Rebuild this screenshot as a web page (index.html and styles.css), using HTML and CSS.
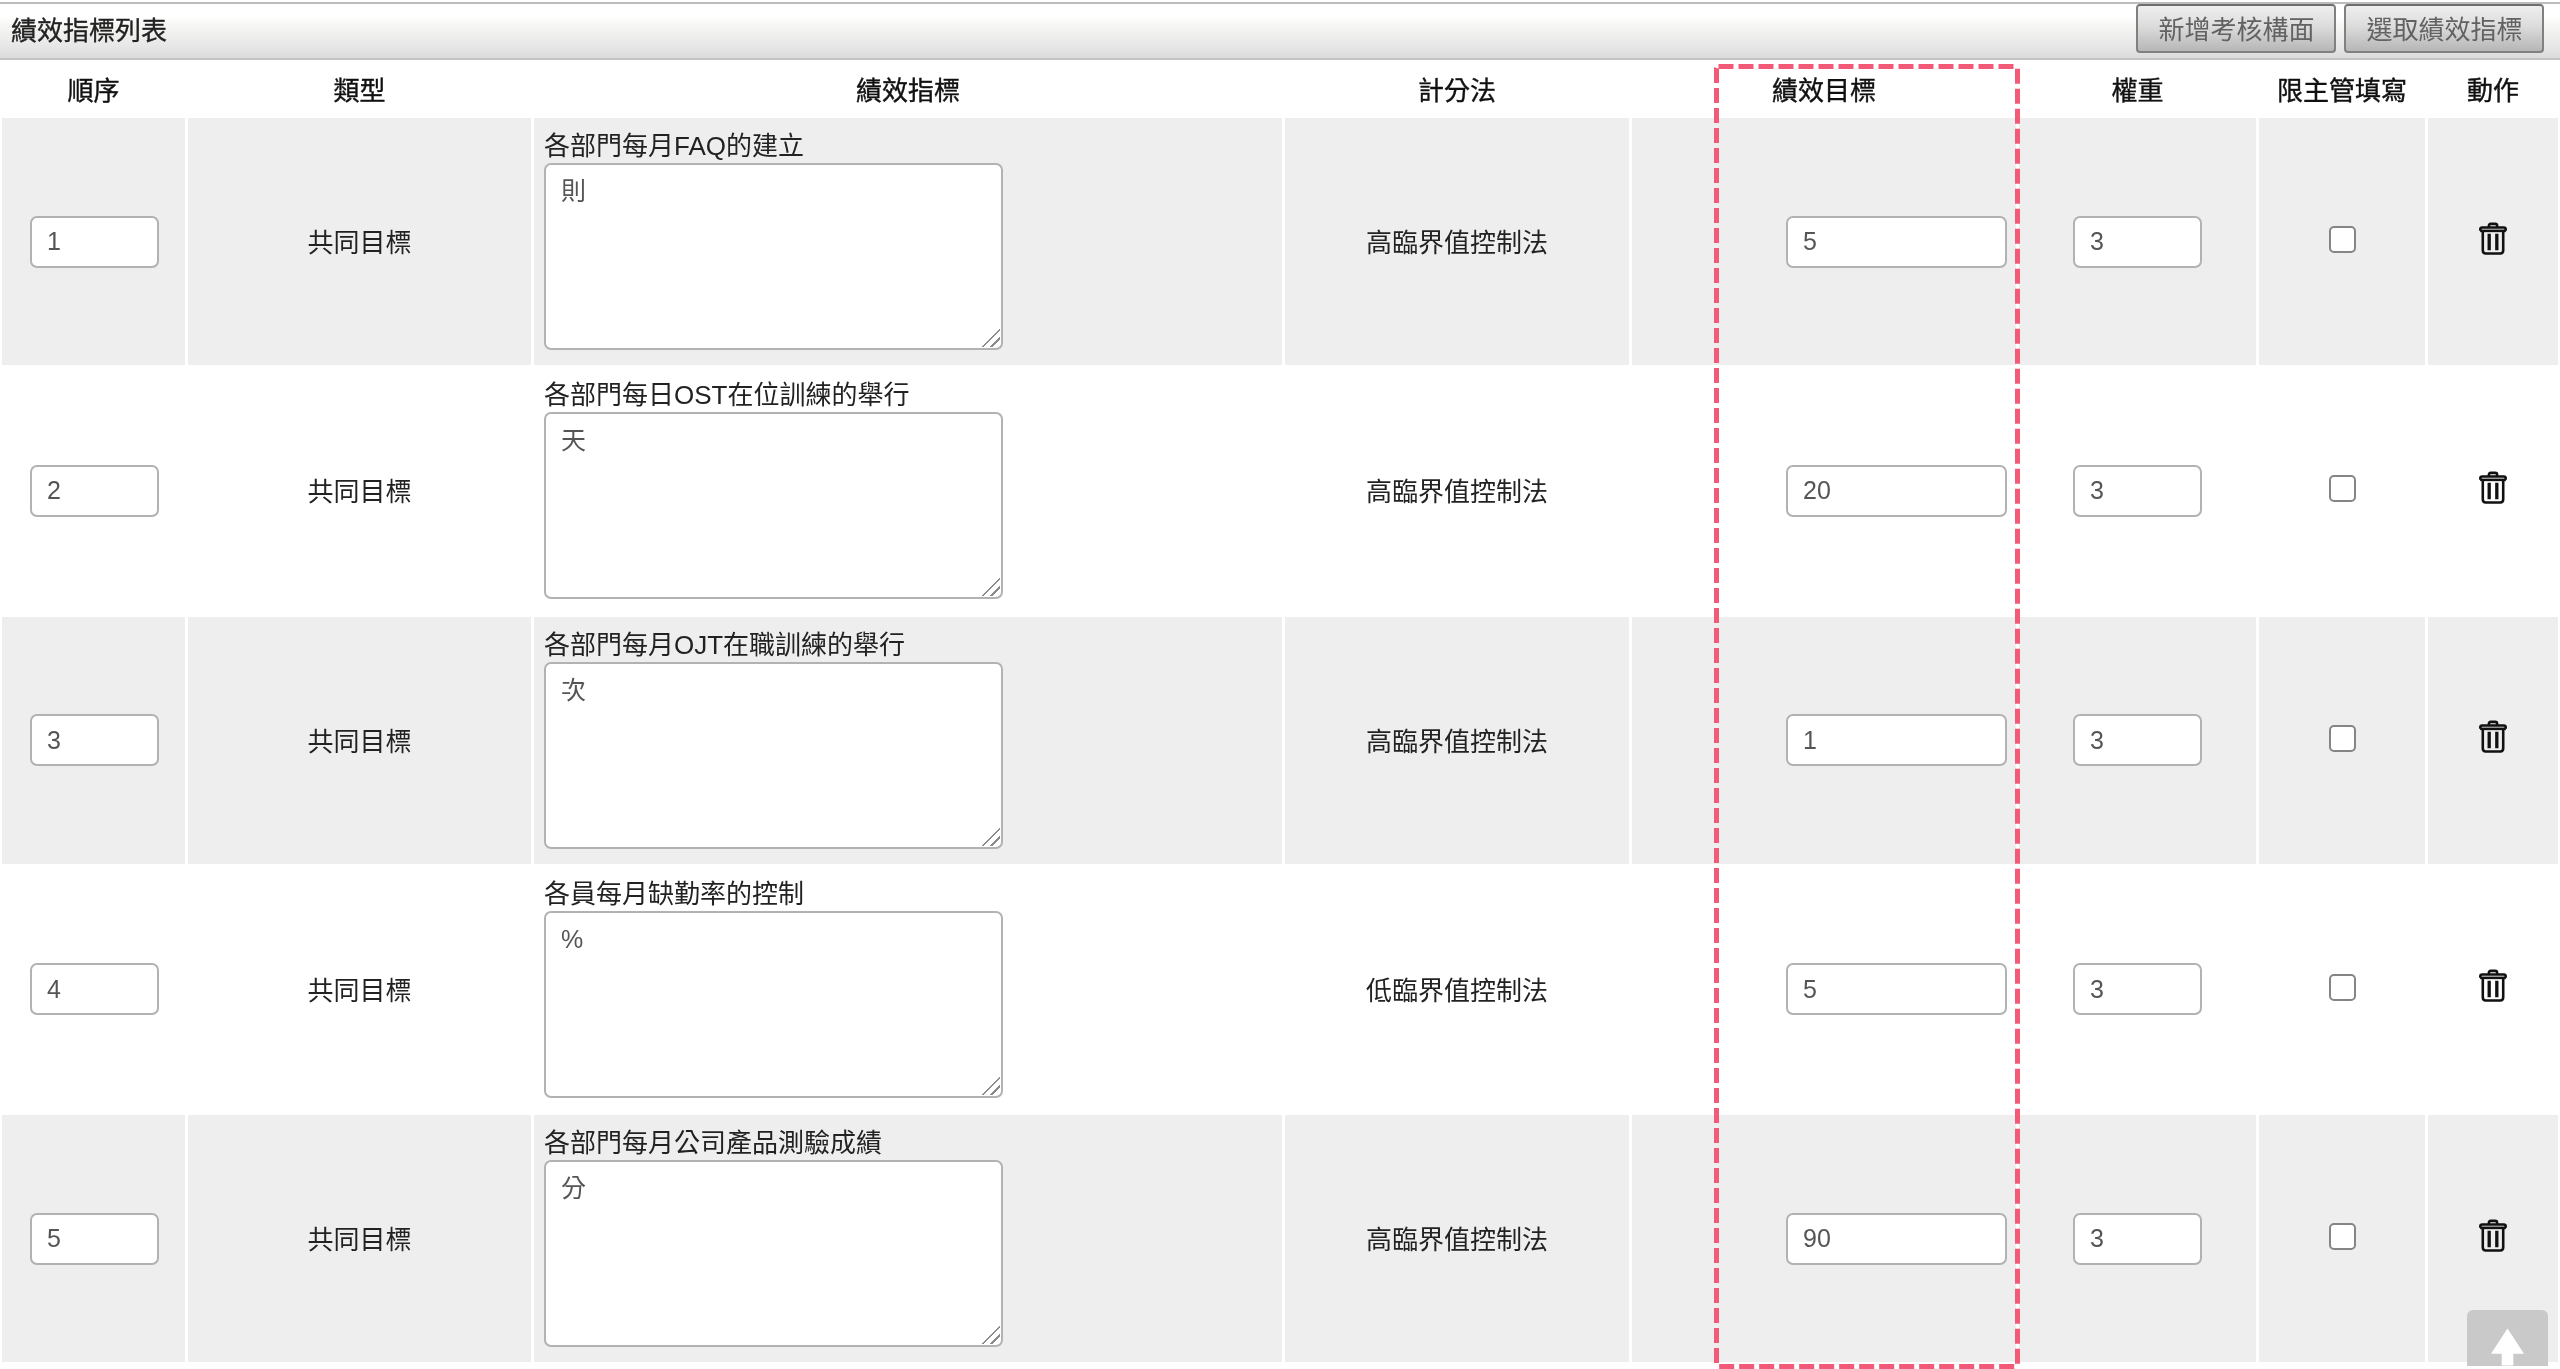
FILE: index.html
```html
<!DOCTYPE html>
<html lang="zh-Hant">
<head>
<meta charset="utf-8">
<title>績效指標列表</title>
<link rel="stylesheet" href="styles.css">
</head>
<body>
<div class="page">
  <header class="titlebar">
    <h1 class="title">績效指標列表</h1>
    <div class="actions">
      <button class="btn" type="button">新增考核構面</button>
      <button class="btn" type="button">選取績效指標</button>
    </div>
  </header>
  <div class="cols head">
    <div>順序</div><div>類型</div><div>績效指標</div><div>計分法</div><div>績效目標</div><div>權重</div><div>限主管填寫</div><div>動作</div>
  </div>
  <div class="rows">
    <div class="cols row">
      <div class="order"><input class="field small" value="1"></div>
      <div class="text">共同目標</div>
      <div class="kpi"><label class="kpi-label">各部門每月FAQ的建立</label><div class="note"><textarea class="note-text">則</textarea></div></div>
      <div class="text">高臨界值控制法</div>
      <div class="target"><input class="field wide" value="5"></div>
      <div><input class="field small" value="3"></div>
      <div class="raised"><input class="check" type="checkbox"></div>
      <div class="raised"><svg class="trash" viewBox="0 0 27 32"><path d="M9.5 5V3.6Q9.5 1.8 11.3 1.8H15.7Q17.5 1.8 17.5 3.6V5"/><path class="lid" d="M1.2 8.5V7Q1.2 5.4 3 5.4H24Q25.8 5.4 25.8 7V8.5"/><path d="M1 8.6H26"/><path d="M3.6 8.6V27.5Q3.6 30.6 6.4 30.6H20.6Q23.4 30.6 23.4 27.5V8.6"/><path class="bar" d="M9.8 11.5V27.5M17.2 11.5V27.5"/></svg></div>
    </div>
    <div class="cols row">
      <div class="order"><input class="field small" value="2"></div>
      <div class="text">共同目標</div>
      <div class="kpi"><label class="kpi-label">各部門每日OST在位訓練的舉行</label><div class="note"><textarea class="note-text">天</textarea></div></div>
      <div class="text">高臨界值控制法</div>
      <div class="target"><input class="field wide" value="20"></div>
      <div><input class="field small" value="3"></div>
      <div class="raised"><input class="check" type="checkbox"></div>
      <div class="raised"><svg class="trash" viewBox="0 0 27 32"><path d="M9.5 5V3.6Q9.5 1.8 11.3 1.8H15.7Q17.5 1.8 17.5 3.6V5"/><path class="lid" d="M1.2 8.5V7Q1.2 5.4 3 5.4H24Q25.8 5.4 25.8 7V8.5"/><path d="M1 8.6H26"/><path d="M3.6 8.6V27.5Q3.6 30.6 6.4 30.6H20.6Q23.4 30.6 23.4 27.5V8.6"/><path class="bar" d="M9.8 11.5V27.5M17.2 11.5V27.5"/></svg></div>
    </div>
    <div class="cols row">
      <div class="order"><input class="field small" value="3"></div>
      <div class="text">共同目標</div>
      <div class="kpi"><label class="kpi-label">各部門每月OJT在職訓練的舉行</label><div class="note"><textarea class="note-text">次</textarea></div></div>
      <div class="text">高臨界值控制法</div>
      <div class="target"><input class="field wide" value="1"></div>
      <div><input class="field small" value="3"></div>
      <div class="raised"><input class="check" type="checkbox"></div>
      <div class="raised"><svg class="trash" viewBox="0 0 27 32"><path d="M9.5 5V3.6Q9.5 1.8 11.3 1.8H15.7Q17.5 1.8 17.5 3.6V5"/><path class="lid" d="M1.2 8.5V7Q1.2 5.4 3 5.4H24Q25.8 5.4 25.8 7V8.5"/><path d="M1 8.6H26"/><path d="M3.6 8.6V27.5Q3.6 30.6 6.4 30.6H20.6Q23.4 30.6 23.4 27.5V8.6"/><path class="bar" d="M9.8 11.5V27.5M17.2 11.5V27.5"/></svg></div>
    </div>
    <div class="cols row">
      <div class="order"><input class="field small" value="4"></div>
      <div class="text">共同目標</div>
      <div class="kpi"><label class="kpi-label">各員每月缺勤率的控制</label><div class="note"><textarea class="note-text">%</textarea></div></div>
      <div class="text">低臨界值控制法</div>
      <div class="target"><input class="field wide" value="5"></div>
      <div><input class="field small" value="3"></div>
      <div class="raised"><input class="check" type="checkbox"></div>
      <div class="raised"><svg class="trash" viewBox="0 0 27 32"><path d="M9.5 5V3.6Q9.5 1.8 11.3 1.8H15.7Q17.5 1.8 17.5 3.6V5"/><path class="lid" d="M1.2 8.5V7Q1.2 5.4 3 5.4H24Q25.8 5.4 25.8 7V8.5"/><path d="M1 8.6H26"/><path d="M3.6 8.6V27.5Q3.6 30.6 6.4 30.6H20.6Q23.4 30.6 23.4 27.5V8.6"/><path class="bar" d="M9.8 11.5V27.5M17.2 11.5V27.5"/></svg></div>
    </div>
    <div class="cols row">
      <div class="order"><input class="field small" value="5"></div>
      <div class="text">共同目標</div>
      <div class="kpi"><label class="kpi-label">各部門每月公司產品測驗成績</label><div class="note"><textarea class="note-text">分</textarea></div></div>
      <div class="text">高臨界值控制法</div>
      <div class="target"><input class="field wide" value="90"></div>
      <div><input class="field small" value="3"></div>
      <div class="raised"><input class="check" type="checkbox"></div>
      <div class="raised"><svg class="trash" viewBox="0 0 27 32"><path d="M9.5 5V3.6Q9.5 1.8 11.3 1.8H15.7Q17.5 1.8 17.5 3.6V5"/><path class="lid" d="M1.2 8.5V7Q1.2 5.4 3 5.4H24Q25.8 5.4 25.8 7V8.5"/><path d="M1 8.6H26"/><path d="M3.6 8.6V27.5Q3.6 30.6 6.4 30.6H20.6Q23.4 30.6 23.4 27.5V8.6"/><path class="bar" d="M9.8 11.5V27.5M17.2 11.5V27.5"/></svg></div>
    </div>
  </div>
  <svg class="highlight" viewBox="0 0 306 1305"><rect x="2.5" y="2.5" width="301" height="1300" rx="2"/></svg>
  <div class="to-top"><svg class="to-top-arrow" viewBox="0 0 34 38"><path d="M17 0L34 26H23V38H11V26H0Z"/></svg></div>
</div>
</body>
</html>
```
FILE: styles.css
```css
* { box-sizing: border-box; }
html, body { margin: 0; height: 100%; background: #fff; overflow: hidden; }
body {
  font-family: "Liberation Sans", "Noto Sans CJK TC", sans-serif;
  font-size: 26px;
  color: #222;
}
.page {
  position: relative;
  width: 2560px;
  height: 1369px;
  padding-top: 2px;
  filter: blur(0.6px);
}
.titlebar {
  height: 58px;
  border-top: 2px solid #bcbcbc;
  border-bottom: 2px solid #c4c4c4;
  background: linear-gradient(#fff 0, #fff 24%, #f6f6f4 40%, #e8e8e8 75%, #dcdcdc 100%);
  display: flex;
  align-items: flex-start;
  justify-content: space-between;
  padding: 0 16px 0 11px;
}
.title {
  margin: 9px 0 0;
  font-size: 26px;
  font-weight: 400;
  -webkit-text-stroke: 0.35px #222;
  line-height: 36px;
  color: #222;
}
.actions { display: flex; gap: 8px; }
.btn {
  width: 200px;
  height: 49px;
  padding: 2px 0 0 1px;
  border: 2px solid #808080;
  border-top-color: #6e6e6e;
  border-radius: 4px;
  background: linear-gradient(#efefef, #dcdcdc 45%, #b6b6b6);
  color: #626262;
  font: inherit;
  line-height: 42px;
}
.cols {
  display: grid;
  grid-template-columns: 183px 343px 748px 344px 384px 237px 166px 130px;
  column-gap: 3px;
  padding-left: 2px;
}
.cols > div {
  display: flex;
  align-items: center;
  justify-content: center;
}
.head {
  height: 58px;
  padding-bottom: 1px;
  font-weight: 400;
  -webkit-text-stroke: 0.4px #111;
  color: #111;
}
.rows {
  display: flex;
  flex-direction: column;
  gap: 2.25px;
}
.row { height: 247px; }
.row:nth-child(odd) > div { background: #eee; }
.cols > .text { padding-bottom: 2px; }
.cols > .order { padding-left: 2px; }
.cols > .kpi {
  display: block;
  padding: 12px 0 0 10px;
}
.kpi-label {
  display: block;
  line-height: 33px;
  font-size: 26px;
  color: #222;
}
.note {
  position: relative;
  width: 459px;
  height: 187px;
}
.note::after {
  content: "";
  position: absolute;
  right: 3px;
  bottom: 3px;
  width: 18px;
  height: 18px;
  background: linear-gradient(135deg, transparent 48%, #8a8a8a 48%, #8a8a8a 55%, transparent 55%, transparent 72%, #8a8a8a 72%, #8a8a8a 80%, transparent 80%);
}
.note-text {
  display: block;
  width: 100%;
  height: 100%;
  padding: 10px 15px;
  border: 2px solid #b2b2b2;
  border-radius: 7px;
  background: #fff;
  color: #555;
  font: inherit;
  font-size: 25px;
  line-height: 32px;
  resize: none;
  outline: 0;
}
.field {
  height: 52px;
  padding: 0 15px;
  border: 2px solid #b2b2b2;
  border-radius: 7px;
  background: #fff;
  color: #555;
  font: inherit;
  font-size: 25px;
  outline: 0;
}
.small { width: 129px; }
.wide { width: 221px; }
.cols > .target {
  justify-content: flex-end;
  padding-right: 9px;
}
.raised { padding-bottom: 4px; }
.check {
  appearance: none;
  width: 27px;
  height: 27px;
  margin: 0;
  border: 2px solid #858585;
  border-radius: 5px;
  background: #fff;
}
.trash {
  width: 28px;
  height: 33px;
  margin-bottom: 3px;
  fill: none;
  stroke: #111;
  stroke-width: 2.5;
}
.trash .bar { stroke-width: 3.2; }
.highlight {
  position: absolute;
  left: 1714px;
  top: 64px;
  width: 306px;
  height: 1305px;
  overflow: hidden;
}
.highlight rect {
  fill: none;
  stroke: #f25a78;
  stroke-width: 5;
  stroke-dasharray: 15 5;
}
.to-top {
  position: absolute;
  left: 2467px;
  top: 1310px;
  width: 81px;
  height: 56px;
  border-radius: 6px 6px 0 0;
  background: #c8c9c8;
  overflow: hidden;
}
.to-top-arrow {
  position: absolute;
  left: 24px;
  top: 18px;
  width: 33px;
  height: 38px;
  fill: #fff;
}
```
